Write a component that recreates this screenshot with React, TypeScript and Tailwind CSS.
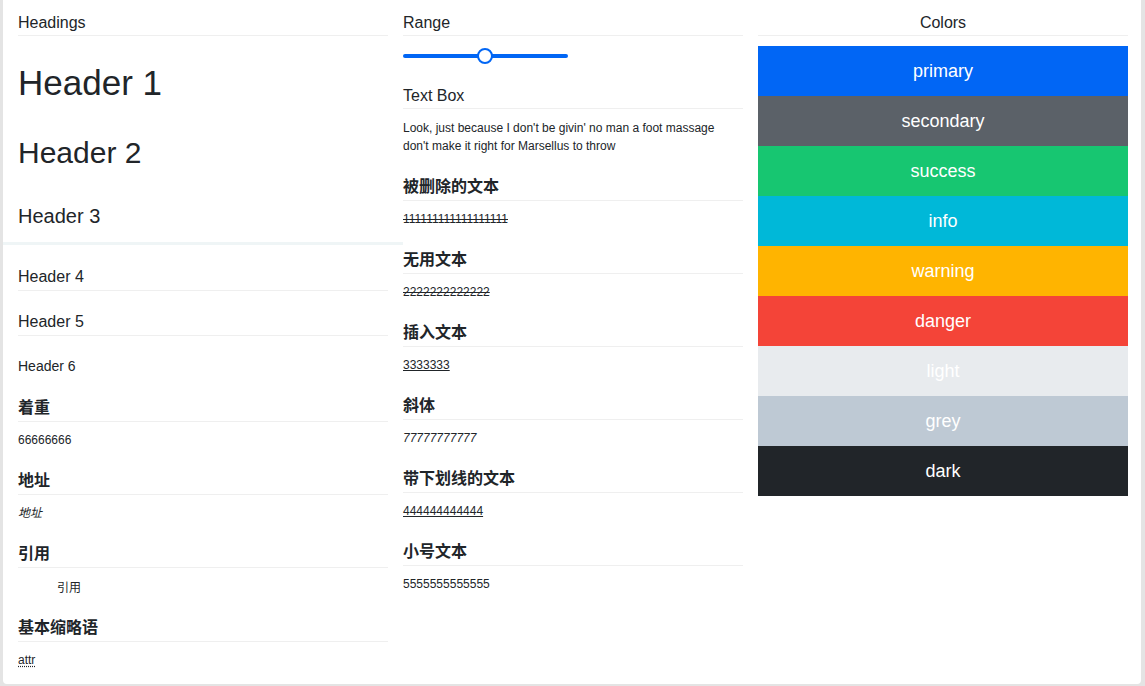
import { ReactNode } from 'react';

const font = "font-['Liberation_Sans','Noto_Sans_CJK_SC',sans-serif]";

function Section({ title, children, gap = 'mt-[21px]' }: { title: string; children: ReactNode; gap?: string }) {
  return (
    <div className={gap}>
      <div className="border-b border-[#efefef] pb-[2px] text-[16px] font-semibold leading-[22px]">{title}</div>
      <div className="mt-[9px] text-[12px] leading-[18px]">{children}</div>
    </div>
  );
}

const colors = [
  { name: 'primary', cls: 'bg-[#0166f5]' },
  { name: 'secondary', cls: 'bg-[#5b6168]' },
  { name: 'success', cls: 'bg-[#17c671]' },
  { name: 'info', cls: 'bg-[#00b8d8]' },
  { name: 'warning', cls: 'bg-[#ffb400]' },
  { name: 'danger', cls: 'bg-[#f44438]' },
  { name: 'light', cls: 'bg-[#e8ebee]' },
  { name: 'grey', cls: 'bg-[#bec9d4]' },
  { name: 'dark', cls: 'bg-[#212529]' },
];

export default function App() {
  return (
    <div className={`${font} h-[686px] w-full bg-[#e4e4e4] pb-[2px] pl-[3px] pr-[4px] text-[#212529]`}>
      <div className="flex h-full gap-[15px] rounded-b-[4px] bg-white px-[15px] pt-[12px]">
        {/* Headings */}
        <div className="w-[370px] shrink-0">
          <div className="border-b border-[#efefef] pb-[1px] text-[16px] leading-[22px]">Headings</div>
          <div className="mt-[26px] text-[35px] leading-[42px]">Header 1</div>
          <div className="mt-[31px] text-[30px] leading-[36px]">Header 2</div>
          <div className="mt-[31px] text-[20px] leading-[28px]">Header 3</div>
          <div className="-mx-[15px] mt-[12px] h-[3px] bg-[#eff5f6]" />
          <div className="mt-[21px] border-b border-[#efefef] pb-[2px] text-[16px] leading-[22px]">Header 4</div>
          <div className="mt-[20px] border-b border-[#efefef] pb-[2px] text-[16px] leading-[22px]">Header 5</div>
          <div className="mt-[20px] text-[14px] leading-[20px]">Header 6</div>
          <Section title="着重">66666666</Section>
          <Section title="地址">
            <span className="italic">地址</span>
          </Section>
          <Section title="引用">
            <div className="ml-[39px] pt-[2px]">引用</div>
          </Section>
          <Section title="基本缩略语" gap="mt-[20px]">
            <span className="underline decoration-dotted underline-offset-2">attr</span>
          </Section>
        </div>

        {/* Range and text */}
        <div className="w-[340px] shrink-0">
          <div className="border-b border-[#efefef] pb-[1px] text-[16px] leading-[22px]">Range</div>
          <div className="relative mt-[18px] h-[4px] w-[165px] rounded-full bg-[#0166f5]">
            <div className="absolute left-[74px] top-[-6px] h-[16px] w-[16px] rounded-full border-2 border-[#0166f5] bg-white" />
          </div>
          <div className="mt-[27px] border-b border-[#efefef] pb-[1px] text-[16px] leading-[22px]">Text Box</div>
          <p className="mt-[10px] text-[12px] leading-[18px]">
            Look, just because I don't be givin' no man a foot massage don't make it right for Marsellus to throw
          </p>
          <Section title="被删除的文本">
            <span className="line-through">111111111111111111</span>
          </Section>
          <Section title="无用文本">
            <span className="line-through">2222222222222</span>
          </Section>
          <Section title="插入文本">
            <span className="underline">3333333</span>
          </Section>
          <Section title="斜体">
            <span className="italic">77777777777</span>
          </Section>
          <Section title="带下划线的文本">
            <span className="underline">444444444444</span>
          </Section>
          <Section title="小号文本">5555555555555</Section>
        </div>

        {/* Colors */}
        <div className="w-[370px] shrink-0">
          <div className="border-b border-[#efefef] pb-[1px] text-center text-[16px] leading-[22px]">Colors</div>
          <div className="mt-[10px] flex flex-col">
            {colors.map((c) => (
              <div key={c.name} className={`${c.cls} flex h-[50px] items-center justify-center text-[18px] text-white`}>
                {c.name}
              </div>
            ))}
          </div>
        </div>
      </div>
    </div>
  );
}
